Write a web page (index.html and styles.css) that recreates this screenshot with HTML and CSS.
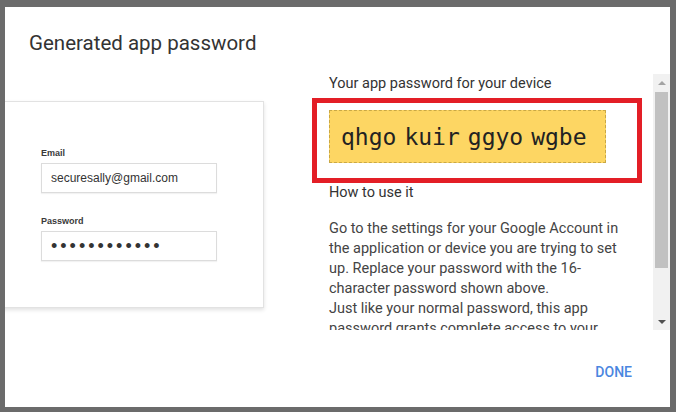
FILE: index.html
```html
<!DOCTYPE html>
<html>
<head>
    <meta charset="utf-8">
    <title>Generated app password</title>
    <link rel="stylesheet" href="styles.css">
</head>
<body>
<div class="dialog">
    <div class="dialog-title">Generated app password</div>
    <div class="dialog-body">
        <div class="preview">
            <div class="login-card">
                <div class="field-label">Email</div>
                <div class="field-box">securesally@gmail.com</div>
                <div class="field-label second">Password</div>
                <div class="field-box dots">••••••••••••</div>
            </div>
        </div>
        <div class="info">
            <div class="info-scroll">
                <div class="info-label">Your app password for your device</div>
                <div class="highlight">
                    <div class="app-password">
                        <span>qhgo</span><span>kuir</span><span>ggyo</span><span>wgbe</span>
                    </div>
                </div>
                <div class="info-label">How to use it</div>
                <p class="info-text first">Go to the settings for your Google Account in the application or device you are trying to set up. Replace your password with the 16-character password shown above.</p>
                <p class="info-text">Just like your normal password, this app password grants complete access to your Google Account. You won't need to remember it, so don't write it down or share it with anyone.</p>
            </div>
            <div class="scrollbar">
                <div class="scroll-arrow"><span class="tri up"></span></div>
                <div class="scroll-thumb"></div>
                <div class="scroll-rest"></div>
                <div class="scroll-arrow"><span class="tri down"></span></div>
            </div>
        </div>
    </div>
    <div class="dialog-actions">
        <button class="done-btn">DONE</button>
    </div>
</div>
</body>
</html>
```

FILE: styles.css
```css
body {
    margin: 0;
    background-color: #6b6b6b;
    font-family: Roboto, "Liberation Sans", sans-serif;
}

.dialog {
    width: 665px;
    height: 400px;
    margin: 7px 0 0 5px;
    background-color: #fff;
    overflow: hidden;
}

.dialog-title {
    padding: 24px 0 0 24px;
    font-size: 20.5px;
    line-height: 24px;
    color: #333;
}

.dialog-body {
    display: flex;
    padding-top: 19px;
    height: 256px;
}

.preview {
    width: 258px;
}

.login-card {
    width: 222px;
    margin: 27px 0 0 -10px;
    padding: 45px 0 46px 45px;
    border: 1px solid #e2e2e2;
    box-shadow: 0 2px 4px rgba(0, 0, 0, 0.12);
    font-family: "Liberation Sans", Arial, sans-serif;
}

.field-label {
    font-size: 9px;
    font-weight: bold;
    line-height: 12px;
    color: #3a3a3a;
    margin-bottom: 4px;
}

.field-label.second {
    margin-top: 22px;
}

.field-box {
    width: 165px;
    height: 28px;
    padding-left: 9px;
    border: 1px solid #dcdcdc;
    box-shadow: 0 1px 1px rgba(0, 0, 0, 0.05);
    font-size: 12px;
    line-height: 28px;
    color: #333;
}

.field-box.dots {
    font-size: 18px;
    letter-spacing: 3px;
    color: #333;
}

.info {
    display: flex;
    width: 358px;
    margin-left: auto;
}

.info-scroll {
    flex: 1;
    padding-left: 17px;
    overflow: hidden;
}

.info-label {
    font-size: 14.5px;
    line-height: 20px;
    color: #333;
}

.highlight {
    width: 308px;
    margin: 4px 0 0 -17px;
    padding: 7px 0 15px 12px;
    border: 5px solid #e31e26;
}

.app-password {
    display: flex;
    gap: 8px;
    width: 264px;
    padding: 11px 0 10px 11px;
    background-color: #fdd663;
    border: 1px dashed #c9a845;
    font-family: "DejaVu Sans Mono", "Liberation Mono", monospace;
    font-size: 23px;
    line-height: 30px;
    color: #222;
}

.info-text {
    width: 295px;
    margin: 0;
    font-size: 14.5px;
    line-height: 20px;
    color: #444;
}

.info-text.first {
    margin-top: 16px;
}

.scrollbar {
    width: 17px;
    display: flex;
    flex-direction: column;
    background-color: #f1f1f1;
}

.scroll-arrow {
    height: 17px;
    display: flex;
    align-items: center;
    justify-content: center;
}

.tri {
    width: 0;
    height: 0;
    border-left: 4px solid transparent;
    border-right: 4px solid transparent;
}

.tri.up {
    border-bottom: 4px solid #a3a3a3;
}

.tri.down {
    border-top: 4px solid #505050;
}

.scroll-thumb {
    height: 176px;
    margin: 1px 2px 0;
    background-color: #c1c1c1;
}

.scroll-rest {
    flex: 1;
}

.dialog-actions {
    display: flex;
    justify-content: flex-end;
    padding: 32px 30px 0 0;
}

.done-btn {
    padding: 0 8px;
    border: none;
    background: none;
    font-family: Roboto, "Liberation Sans", sans-serif;
    font-size: 14px;
    font-weight: 500;
    line-height: 20px;
    color: #4a86e0;
    cursor: pointer;
}
```
